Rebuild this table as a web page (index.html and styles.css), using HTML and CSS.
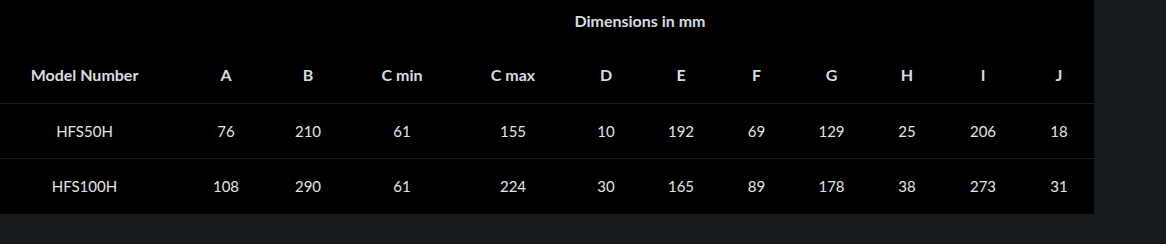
FILE: index.html
```html
<!DOCTYPE html>
<html>
<head>
<meta charset="utf-8">
<link rel="stylesheet" href="styles.css">
</head>
<body>
<div class="wrap">
<table class="dims">
<colgroup>
<col class="c-model"><col class="c-a"><col class="c-b"><col class="c-cmin"><col class="c-cmax"><col class="c-d"><col class="c-e"><col class="c-f"><col class="c-g"><col class="c-h"><col class="c-i"><col class="c-j">
</colgroup>
<thead>
<tr class="top-row"><th class="blank"></th><th colspan="11" class="caption">Dimensions in mm</th></tr>
<tr class="head-row">
<th>Model Number</th><th>A</th><th>B</th><th>C min</th><th>C max</th><th>D</th><th>E</th><th>F</th><th>G</th><th>H</th><th>I</th><th>J</th>
</tr>
</thead>
<tbody>
<tr><td>HFS50H</td><td>76</td><td>210</td><td>61</td><td>155</td><td>10</td><td>192</td><td>69</td><td>129</td><td>25</td><td>206</td><td>18</td></tr>
<tr class="last"><td>HFS100H</td><td>108</td><td>290</td><td>61</td><td>224</td><td>30</td><td>165</td><td>89</td><td>178</td><td>38</td><td>273</td><td>31</td></tr>
</tbody>
</table>
</div>
</body>
</html>
```

FILE: styles.css
```css
html, body {
  margin: 0;
  padding: 0;
  background: #16191c;
}
.wrap {
  width: 1094px;
  background: #000;
}
.dims {
  width: 1094px;
  border-collapse: collapse;
  table-layout: fixed;
  font-family: Lato, "Open Sans", sans-serif;
  color: #e4e4e4;
}
.c-model { width: 155px; }
.c-a { width: 112px; }
.c-b { width: 88px; }
.c-cmin { width: 102px; }
.c-cmax { width: 102px; }
.c-d { width: 84px; }
.c-e { width: 76px; }
.c-f { width: 75px; }
.c-g { width: 75px; }
.c-h { width: 76px; }
.c-i { width: 76px; }
.c-j { width: 73px; }

.dims th, .dims td {
  padding: 0;
  text-align: center;
  white-space: nowrap;
}
.dims th {
  font-weight: 700;
  font-size: 16px;
  color: #d8dce2;
}
.top-row th {
  height: 40px;
  vertical-align: middle;
}
.head-row th {
  height: 63px;
  vertical-align: middle;
  padding-top: 6px;
  box-sizing: border-box;
  border-bottom: 1px solid #1c1c1c;
}
.dims td {
  font-size: 15px;
  height: 55px;
  box-sizing: border-box;
  vertical-align: middle;
}
.dims tbody tr:first-child td {
  border-bottom: 1px solid #1c1c1c;
}
.dims tr.last td {
  height: 56px;
}
.dims tr > :nth-child(1) { padding-left: 14px; }
.dims tr > :nth-child(2) { padding-left: 30px; }
.dims tr > :nth-child(3) { padding-right: 6px; }
.dims tr > :nth-child(4) { padding-right: 8px; }
.dims tr > :nth-child(5) { padding-left: 10px; }
.dims tr > :nth-child(6) { padding-left: 10px; }
.dims tr > :nth-child(12) { padding-left: 3px; }
.dims .top-row th.blank { padding: 0; }
.dims .top-row th.caption { padding: 0 0 0 31px; }
```
